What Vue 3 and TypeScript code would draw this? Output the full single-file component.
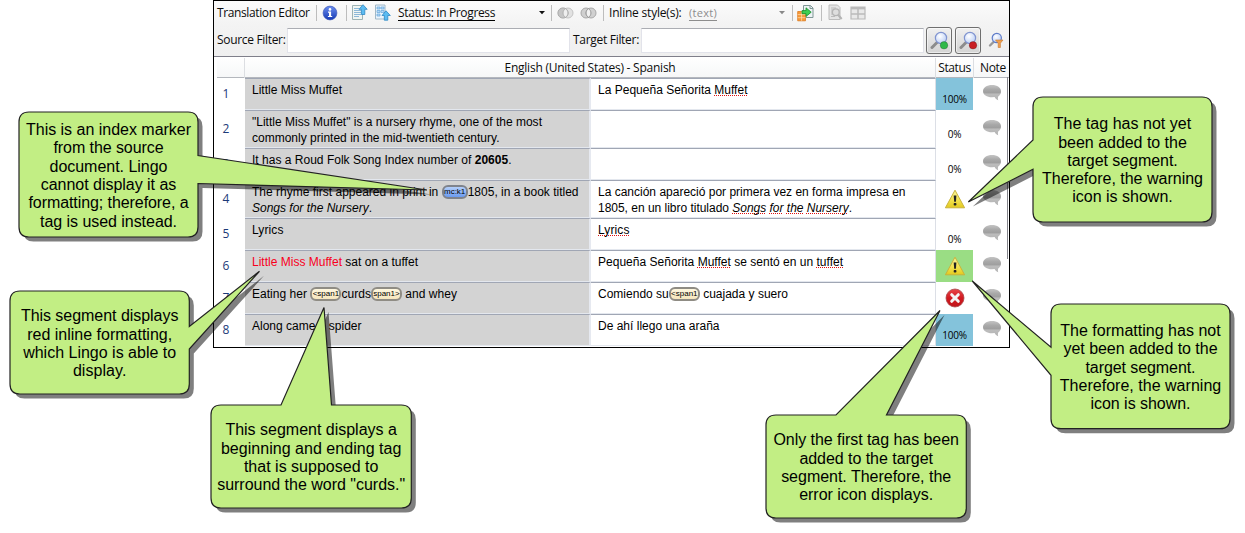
<script setup lang="ts">
import type { Directive } from 'vue'

interface Piece {
  t: string
  k?: 'tag' | 'idx' | 'b' | 'red' | 'i' | 'sp' | 'isp'
}
interface Line {
  w: number
  p: Piece[]
}
interface Row {
  n: number
  h: number
  src: Line[]
  dst: Line[]
  status: string
  tone?: string
}
interface Callout {
  x: number
  y: number
  w: number
  h: number
  d: string
  lines: [string, number][]
}

// Spreads letters so that a line takes the given width.
const vFit: Directive<HTMLElement, number> = {
  mounted(el, { value }) {
    const count = (el.textContent ?? '').trim().length - el.querySelectorAll('.tag').length * 5
    const natural = el.getBoundingClientRect().width
    el.style.letterSpacing = `${((value - natural) / count).toFixed(3)}px`
  },
}

const line = (w: number, ...p: (string | Piece)[]): Line => ({
  w,
  p: p.map((x) => (typeof x === 'string' ? { t: x } : x)),
})

const rows: Row[] = [
  { n: 1, h: 32, src: [line(90, 'Little Miss Muffet')], dst: [line(149.5, 'La Pequeña Señorita ', { t: 'Muffet', k: 'sp' })], status: '100%', tone: 'blue' },
  { n: 2, h: 38, src: [line(290, '"Little Miss Muffet" is a nursery rhyme, one of the most'), line(247.5, 'commonly printed in the mid-twentieth century.')], dst: [], status: '0%' },
  { n: 3, h: 32, src: [line(259.5, 'It has a Roud Folk Song Index number of ', { t: '20605', k: 'b' }, '.')], dst: [], status: '0%' },
  {
    n: 4, h: 38,
    src: [line(326.5, 'The rhyme first appeared in print in ', { t: 'mc:k1', k: 'idx' }, '1805, in a book titled'), line(120, { t: 'Songs for the Nursery', k: 'i' }, '.')],
    dst: [
      line(307.5, 'La canción apareció por primera vez en forma impresa en'),
      line(254, '1805, en un libro titulado ', { t: 'Songs', k: 'isp' }, ' ', { t: 'for', k: 'isp' }, ' ', { t: 'the', k: 'isp' }, ' ', { t: 'Nursery', k: 'isp' }, '.'),
    ],
    status: 'warn',
  },
  { n: 5, h: 32, src: [line(31.5, 'Lyrics')], dst: [line(31.5, { t: 'Lyrics', k: 'sp' })], status: '0%' },
  { n: 6, h: 32, src: [line(166, { t: 'Little Miss Muffet', k: 'red' }, ' sat on a tuffet')], dst: [line(245, 'Pequeña Señorita ', { t: 'Muffet', k: 'sp' }, ' se sentó en un ', { t: 'tuffet', k: 'sp' })], status: 'warn', tone: 'green' },
  { n: 7, h: 32, src: [line(205, 'Eating her ', { t: '<span1', k: 'tag' }, 'curds', { t: 'span1>', k: 'tag' }, ' and whey')], dst: [line(190, 'Comiendo su', { t: '<span1', k: 'tag' }, ' cuajada y suero')], status: 'error' },
  { n: 8, h: 32, src: [line(109.5, 'Along came a spider')], dst: [line(121.5, 'De ahí llego una araña')], status: '100%', tone: 'blue' },
]

type Tip = { side: 'l' | 'r' | 't'; a: number; b: number; x: number; y: number }
function bubble(x1: number, y1: number, x2: number, y2: number, tip: Tip): string {
  const r = 10
  const top = tip.side === 't' ? `H${tip.a}L${tip.x} ${tip.y}L${tip.b} ${y1}` : ''
  const right = tip.side === 'r' ? `V${tip.a}L${tip.x} ${tip.y}L${x2} ${tip.b}` : ''
  const left = tip.side === 'l' ? `V${tip.b}L${tip.x} ${tip.y}L${x1} ${tip.a}` : ''
  return `M${x1 + r} ${y1}${top}H${x2 - r}Q${x2} ${y1} ${x2} ${y1 + r}${right}V${y2 - r}Q${x2} ${y2} ${x2 - r} ${y2}H${x1 + r}Q${x1} ${y2} ${x1} ${y2 - r}${left}V${y1 + r}Q${x1} ${y1} ${x1 + r} ${y1}Z`
}
function callout(x1: number, y1: number, x2: number, y2: number, tip: Tip, lines: [string, number][]): Callout {
  return { x: x1, y: y1, w: x2 - x1, h: y2 - y1, d: bubble(x1, y1, x2, y2, tip), lines }
}

const callouts: Callout[] = [
  callout(19, 112, 198, 237, { side: 'r', a: 155.5, b: 183.5, x: 427, y: 190 }, [
    ['This is an index marker', 165], ['from the source', 110], ['document. Lingo', 118], ['cannot display it as', 135.5], ['formatting; therefore, a', 160], ['tag is used instead.', 137],
  ]),
  callout(10, 291, 189.3, 394, { side: 'r', a: 326.5, b: 349, x: 259.5, y: 271.3 }, [
    ['This segment displays', 157.5], ['red inline formatting,', 145], ['which Lingo is able to', 153], ['display.', 53.5],
  ]),
  callout(211, 405, 411.3, 508, { side: 't', a: 281, b: 331.5, x: 324, y: 307.5 }, [
    ['This segment displays a', 171.5], ['beginning and ending tag', 180.5], ['that is supposed to', 134.5], ['surround the word "curds."', 188],
  ]),
  callout(766, 415, 966.3, 518, { side: 't', a: 836, b: 886.5, x: 940, y: 310.5 }, [
    ['Only the first tag has been', 185.5], ['added to the target', 133.5], ['segment. Therefore, the', 170], ['error icon displays.', 134],
  ]),
  callout(1033, 97, 1212, 222, { side: 'l', a: 140, b: 169.3, x: 968.3, y: 202 }, [
    ['The tag has not yet', 137.5], ['been added to the', 128.5], ['target segment.', 110.5], ['Therefore, the warning', 161], ['icon is shown.', 100.5],
  ]),
  callout(1051, 304, 1230, 428.7, { side: 'l', a: 347.3, b: 375.3, x: 972.3, y: 281 }, [
    ['The formatting has not', 160.5], ['yet been added to the', 154], ['target segment.', 110], ['Therefore, the warning', 161.5], ['icon is shown.', 100],
  ]),
]
const dots = ['#2fb84a', '#c81e24']
</script>

<template>
  <div class="stage">
    <svg class="defs" width="0" height="0">
      <defs>
        <linearGradient id="gInfo" x1="0" y1="0" x2="0" y2="1"><stop offset="0" stop-color="#6d8ff0" /><stop offset="1" stop-color="#1539b4" /></linearGradient>
        <linearGradient id="gWarn" x1="0" y1="0" x2="0" y2="1"><stop offset="0" stop-color="#fbf6a0" /><stop offset=".6" stop-color="#f1e04a" /><stop offset="1" stop-color="#e3c91e" /></linearGradient>
        <linearGradient id="gErr" x1="0" y1="0" x2="0" y2="1"><stop offset="0" stop-color="#e8474a" /><stop offset=".5" stop-color="#d11a20" /><stop offset="1" stop-color="#c0141a" /></linearGradient>
        <linearGradient id="gNote" x1="0" y1="0" x2="0" y2="1"><stop offset="0" stop-color="#c4c4c4" /><stop offset=".3" stop-color="#a8a8a8" /><stop offset=".5" stop-color="#9f9f9f" /><stop offset=".6" stop-color="#bcbcbc" /><stop offset="1" stop-color="#b4b4b4" /></linearGradient>
        <radialGradient id="gLens" cx=".4" cy=".35" r=".7"><stop offset="0" stop-color="#fff" /><stop offset="1" stop-color="#b9cdf5" /></radialGradient>
      </defs>
    </svg>

    <div class="window">
      <header class="tools">
        <span class="ui title"><span v-fit="92.5">Translation Editor</span></span>
        <i class="sep s1"></i>
        <svg class="info" width="16" height="16" viewBox="0 0 16 16"><circle cx="8" cy="8" r="6.9" fill="url(#gInfo)" stroke="#3b58b8" stroke-width=".7" /><circle cx="8" cy="4.4" r="1.3" fill="#fff" /><path d="M6 6.6h3.1v4.3h1.1v1.2H5.9v-1.2H7V7.8H6z" fill="#fff" /></svg>
        <i class="sep s2"></i>
        <svg class="doc1" width="17" height="17" viewBox="0 0 17 17">
          <path d="M1.5 1.5h10v14h-10z" fill="#f0f5f2" stroke="#9db3b4" />
          <path d="M3 4.500h5M3 6.500h7M3 8.500h7M3 10.500h7M3 12.500h5" stroke="#8db8d8" />
          <path d="M12 .7l4.2 4.6h-2.4v5.2h-3.4V5.300H8z" fill="#5cbcf2" stroke="#2f88c4" stroke-width=".8" />
        </svg>
        <svg class="doc2" width="17" height="17" viewBox="0 0 17 17">
          <path d="M1.500 1h9.500v14h-9.500z" fill="#eaf3fb" stroke="#a0b8c8" />
          <path d="M3 3h3v2h-3zM7 3h3v2h-3zM3 6.500h3v2h-3zM7 6.500h3v2h-3zM3 10h3v2h-3z" fill="#b8dbf6" stroke="#66a6dc" stroke-width=".7" />
          <path d="M12 6.800l4.300 4.700h-2.500v4.700h-3.500v-4.700H8z" fill="#5cbcf2" stroke="#2f88c4" stroke-width=".8" />
        </svg>
        <span class="ui under status"><span v-fit="97">Status: In Progress</span></span>
        <svg class="arrow a1" width="7" height="4"><path d="M0 0h6L3 3.300z" fill="#111" /></svg>
        <i class="sep s3"></i>
        <svg class="c1" width="17" height="12" viewBox="0 0 17 12"><circle cx="11" cy="6" r="5" fill="#e2e2e2" stroke="#c4c4c4" /><circle cx="6" cy="6" r="5.100" fill="#c6c6c6" stroke="#a8a8a8" /><path d="M8.500 1.700a5 5 0 0 1 0 8.600a5 5 0 0 1 0-8.600" fill="#efefef" stroke="#a8a8a8" stroke-width=".8" /></svg>
        <svg class="c2" width="17" height="12" viewBox="0 0 17 12"><circle cx="6" cy="6" r="5" fill="#d0d0d0" stroke="#a8a8a8" /><circle cx="11" cy="6" r="5" fill="#d0d0d0" stroke="#a8a8a8" /><path d="M8.500 1.700a5 5 0 0 1 0 8.600a5 5 0 0 1 0-8.600" fill="#f3f3f3" stroke="#8f8f8f" stroke-width=".9" /></svg>
        <i class="sep s4"></i>
        <span class="ui inline"><span v-fit="72.5">Inline style(s):</span></span>
        <span class="ui under dim text"><span v-fit="28">(text)</span></span>
        <svg class="arrow a2" width="7" height="4"><path d="M0 0h6L3 3.300z" fill="#888" /></svg>
        <i class="sep s5"></i>
        <svg class="exp" width="17" height="18" viewBox="0 0 17 18">
          <path d="M6.500 1.500h7l2.500 2.500v9.500H6.500z" fill="#edf3f4" stroke="#7f9696" />
          <path d="M13 1.500v3h3" fill="none" stroke="#7f9696" />
          <path d="M.7 7.500h7.800v9.300H.7z" fill="#f6993a" stroke="#dd7a1e" stroke-width=".8" />
          <path d="M.7 10.600h7.800M.7 13.700h7.800M4.600 7.500v9.300" stroke="#ffe2b8" stroke-width=".7" />
          <path d="M5 6.600h4V3.800l5.200 4.400L9 12.500V9.700H5z" fill="#3fcf53" stroke="#178a2c" stroke-width=".8" />
        </svg>
        <i class="sep s6"></i>
        <svg class="prev" width="15" height="17" viewBox="0 0 15 17"><path d="M1 1h8.500L12 3.500v12H1z" fill="#e4e4e4" stroke="#bcbcbc" /><path d="M3 4h5M3 6h2M3 8h2M3 10h2M3 12.500h4" stroke="#bbb" /><circle cx="7.800" cy="8.300" r="3.400" fill="#dedede" stroke="#b4b4b4" stroke-width="1.300" /><path d="M10.300 11l3.400 4" stroke="#b4b4b4" stroke-width="2" /></svg>
        <svg class="table" width="16" height="14" viewBox="0 0 16 14"><path d="M1 1h14v12H1z" fill="#e9e9e9" stroke="#bababa" stroke-width="1.200" /><path d="M1 2.200h14" stroke="#bababa" stroke-width="2.400" /><path d="M1 8h14M8 3v10" stroke="#bababa" stroke-width="1.500" /></svg>
      </header>

      <div class="filters">
        <span class="ui lab1"><span v-fit="68.500">Source Filter:</span></span>
        <div class="field"></div>
        <span class="ui lab2"><span v-fit="66">Target Filter:</span></span>
        <div class="field"></div>
        <div v-for="c in dots" :key="c" class="btn">
          <svg width="19" height="20" viewBox="0 0 19 20">
            <path d="M2 16.500l5.500-5.500" stroke="#8c8c8c" stroke-width="3" stroke-linecap="round" />
            <circle cx="11" cy="7" r="5.600" fill="url(#gLens)" stroke="#8094d0" stroke-width="1.200" />
            <circle cx="14" cy="14.300" r="3.800" :fill="c" stroke="#0003" />
          </svg>
        </div>
        <svg class="funnel" width="16" height="17" viewBox="0 0 16 17">
          <path d="M2 13.500l4-4" stroke="#999" stroke-width="2.400" stroke-linecap="round" />
          <circle cx="8.800" cy="6" r="4.600" fill="url(#gLens)" stroke="#5f7cc8" stroke-width="1.200" />
          <path d="M7.500 8h7.500l-2.600 3.200v4.300h-2.200v-4.300z" fill="#f0a050" stroke="#c8762a" stroke-width=".6" />
        </svg>
      </div>

      <div class="grid">
        <div class="head">
          <div></div>
          <div class="ui langs"><span v-fit="171">English (United States) - Spanish</span></div>
          <div class="ui"><span v-fit="32.500">Status</span></div>
          <div class="ui note-h"><span v-fit="26">Note</span></div>
        </div>
        <div v-for="r in rows" :key="r.n" class="row" :class="{ tall: r.h > 32 }">
          <div class="num">{{ r.n }}</div>
          <div v-for="(cell, ci) in [r.src, r.dst]" :key="ci" class="cell" :class="ci ? 'dst' : 'src'">
            <div v-for="(l, li) in cell" :key="li" class="ln"><span v-fit="l.w"><span v-for="(p, pi) in l.p" :key="pi" :class="[p.k, { tag: p.k === 'idx' }]">{{ p.t }}</span></span></div>
          </div>
          <div class="stat" :class="r.tone">
            <svg v-if="r.status === 'warn'" width="22" height="20" viewBox="0 0 22 20">
              <path d="M11 1.200L20.600 18.800H1.400z" fill="url(#gWarn)" stroke="#c9b23a" stroke-width="1" stroke-linejoin="round" />
              <path d="M9.700 6.500h2.700l-.5 6.300h-1.700z" fill="#222" /><rect x="9.700" y="14" width="2.700" height="2.600" rx=".8" fill="#222" />
            </svg>
            <svg v-else-if="r.status === 'error'" width="20" height="20" viewBox="0 0 20 20">
              <circle cx="10" cy="10" r="9" fill="url(#gErr)" stroke="#a8484a" stroke-width=".8" />
              <path d="M6.700 6.700l6.600 6.600M13.300 6.700l-6.600 6.600" stroke="#f4f4f4" stroke-width="3" stroke-linecap="round" />
            </svg>
            <span v-else class="pct"><span v-fit="r.status === '0%' ? 13.500 : 24.500">{{ r.status }}</span></span>
          </div>
          <div class="note">
            <svg width="20" height="18" viewBox="0 0 20 18"><path d="M10 1C4.800 1 1 3.600 1 7.200s3.800 6 9 6l2.600-.1c.9 1.700 2 2.700 3.700 3.200-.5-1.300-.5-2.500-.1-3.900C18 11.300 19 9.500 19 7.200 19 3.600 15.200 1 10 1z" fill="url(#gNote)" /></svg>
          </div>
        </div>
      </div>
    </div>

    <svg class="shapes" width="1245" height="533" viewBox="0 0 1245 533">
      <g v-for="(c, i) in callouts" :key="i">
        <path :d="c.d" transform="translate(4.500 4.500)" fill="#000" fill-opacity=".5" />
        <path :d="c.d" fill="#c2ee84" stroke="#222" stroke-width="1.200" />
      </g>
    </svg>
    <div v-for="(c, i) in callouts" :key="'t' + i" class="callout" :style="{ left: c.x + 'px', top: c.y + 'px', width: c.w + 'px', height: c.h + 'px' }">
      <div v-for="([t, w], li) in c.lines" :key="li" class="cl"><span v-fit="w">{{ t }}</span></div>
    </div>
  </div>
</template>

<style>
body {
  margin: 0;
  background: #fff;
}
</style>

<style scoped>
.stage {
  position: relative;
  width: 1245px;
  height: 533px;
  overflow: hidden;
  font-family: "Liberation Sans", Arial, sans-serif;
  color: #000;
}
.stage * {
  box-sizing: border-box;
}
svg {
  display: block;
  flex: none;
}
.defs,
.shapes {
  position: absolute;
  left: 0;
  top: 0;
}
.window {
  width: 797px;
  height: 348px;
  margin-left: 213px;
  border: 1px solid #000;
  background: #fff;
  overflow: hidden;
}
.ui {
  font: 12px/16px "Open Sans", "Noto Sans", sans-serif;
  white-space: nowrap;
  color: #0c0c0c;
}
.tools {
  display: flex;
  align-items: center;
  height: 24px;
  padding: 0 0 1px 3px;
  background: linear-gradient(#fbfbfb, #f3f3f3);
}
.tools > * {
  flex: none;
}
.title { width: 99px; }
.sep { width: 1px; height: 16px; background: #bdbdbd; }
.info { margin-left: 5px; }
.s2 { margin-left: 8px; }
.doc1 { margin-left: 4px; }
.doc2 { margin-left: 6px; }
.status { margin-left: 7px; width: 97px; }
.under > span { border-bottom: 1px solid #000; display: inline-block; line-height: 14px; }
.dim > span { border-color: #8d8d8d; color: #8d8d8d; }
.a1 { margin-left: 44px; }
.s3 { margin-left: 5px; }
.c1 { margin-left: 5px; }
.c2 { margin-left: 6px; }
.s4 { margin-left: 6px; }
.inline { margin-left: 5px; width: 73px; }
.text { margin-left: 7px; width: 28px; font-size: 11px; }
.a2 { margin-left: 62px; }
.s5 { margin-left: 6px; }
.exp { margin-left: 4px; }
.s6 { margin-left: 7px; }
.prev { margin-left: 6px; }
.table { margin-left: 7px; }
.filters {
  display: flex;
  align-items: center;
  height: 31px;
  padding-left: 3px;
  background: linear-gradient(#f3f3f3, #efefef);
}
.filters .ui { padding-bottom: 1px; }
.lab1 { width: 70px; }
.lab2 { width: 68px; margin-left: 3px; }
.field {
  width: 283px;
  height: 25px;
  border: 1px solid #e2e3ea;
  border-top-color: #abadb3;
  background: #fff;
}
.btn {
  width: 26px;
  height: 27px;
  margin-left: 2px;
  border: 1px solid #6f6f6f;
  border-radius: 3px;
  background: linear-gradient(#f0f0f0, #d4d4d4);
  box-shadow: inset 0 0 0 1px #fff8;
  display: flex;
  align-items: center;
  justify-content: center;
}
.btn + .btn { margin-left: 3px; }
.funnel { margin-left: 7px; }
.grid {
  border-top: 1px solid #7f7f8a;
  padding-left: 3px;
  position: relative;
}
.grid::after {
  content: "";
  position: absolute;
  right: 1px;
  top: 20px;
  width: 1px;
  height: 182px;
  background: #85858c;
}
.head {
  display: grid;
  grid-template-columns: 28px 691px 38px 34px;
  height: 21px;
  padding-top: 1px;
  border-bottom: 1px solid #b4b7bd;
  background: linear-gradient(#fff, #f6f7f8);
}
.head > div {
  border-right: 1px solid #dcdee2;
  text-align: center;
  line-height: 20px;
}
.head > div:last-child {
  border-right: 0;
  padding-left: 4px;
}
.row {
  display: grid;
  grid-template-columns: 28px 346px 345px 37px 38px;
  height: 32px;
}
.row.tall { height: 38px; }
.num {
  padding: 0 10px 1px 0;
  display: flex;
  align-items: center;
  justify-content: center;
  font: 12px "Open Sans", sans-serif;
  color: #1c3a78;
}
.cell {
  font-size: 12px;
  line-height: 16px;
  padding: 3px 0 0 7px;
  border-top: 1px solid #a0a6b4;
  border-bottom: 1px solid #e3e7ee;
  white-space: pre;
}
.src {
  background: #d3d3d3;
  border-right: 2px solid #e6e9f0;
}
.dst { border-right: 1px solid #dcdfe6; }
.ln { height: 16px; }
.b { font-weight: 700; }
.red { color: #f8001c; }
.i, .isp { font-style: italic; }
.sp, .isp {
  text-decoration: underline dotted #e01010 1px;
  text-underline-offset: 1px;
  text-decoration-skip-ink: none;
}
.tag {
  display: inline-block;
  vertical-align: middle;
  width: 31px;
  height: 14px;
  margin: -1px 0 1px;
  border: 2px solid #8f8c84;
  border-radius: 6px;
  background: linear-gradient(#fff8e0, #f6e6bd);
  font-size: 8px;
  line-height: 10px;
  letter-spacing: 0;
  text-indent: 0;
  text-align: center;
  overflow: hidden;
}
.tag.idx {
  width: 26px;
  border-color: #7f838c;
  background: linear-gradient(#b4cffa, #6a9af0);
}
.stat {
  display: flex;
  align-items: center;
  justify-content: center;
}
.blue { background: #84c3db; }
.green { background: #9add84; }
.pct {
  font: 10px/12px "Open Sans", sans-serif;
  padding-top: 10px;
}
.note {
  display: flex;
  align-items: center;
  justify-content: center;
  padding: 0 1px 2px 0;
}
.callout {
  position: absolute;
  display: flex;
  flex-direction: column;
  justify-content: center;
  align-items: center;
  padding-top: 3px;
}
.cl {
  font-size: 16px;
  line-height: 18.300px;
  white-space: nowrap;
}
</style>
